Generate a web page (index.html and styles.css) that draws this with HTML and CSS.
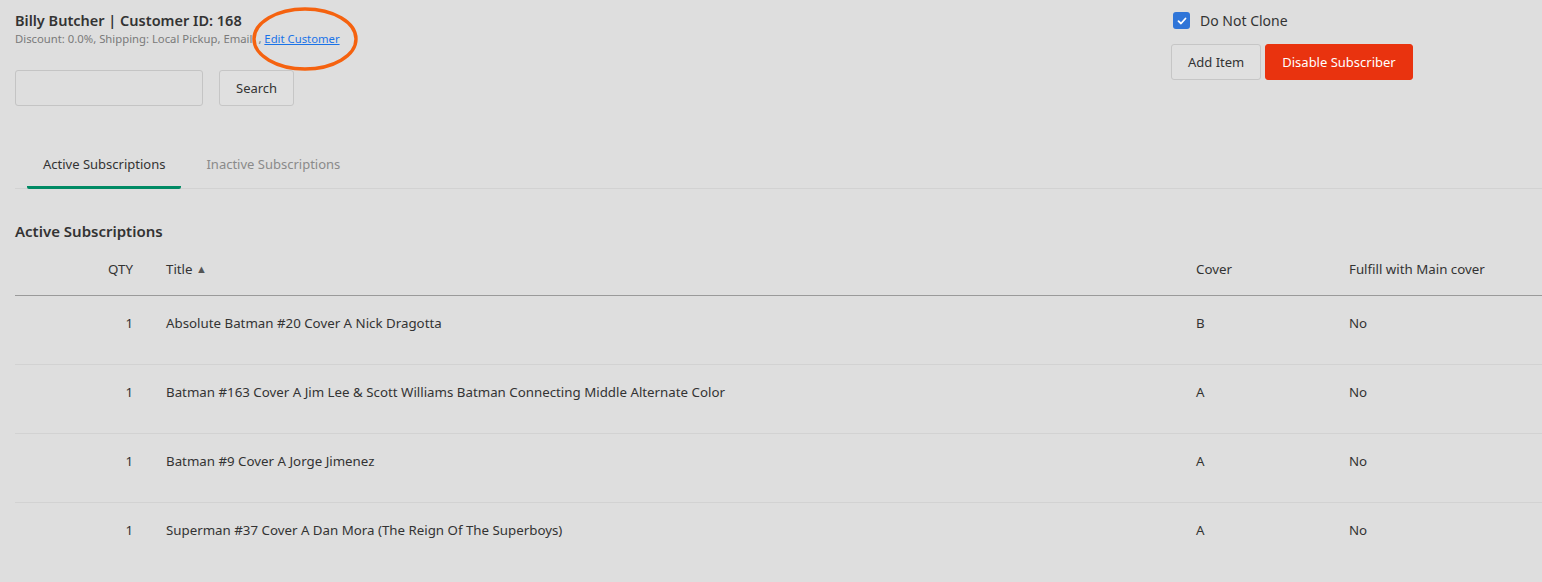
FILE: index.html
```html
<!DOCTYPE html>
<html lang="en">

<head>
  <meta charset="utf-8" />
  <title>Subscriber: Billy Butcher</title>
  <link rel="stylesheet" href="styles.css">
</head>

<body>
  <div class="top">
    <div class="customer">
      <h2 class="customer-name">Billy Butcher | Customer ID: 168</h2>
      <p class="customer-meta">
        Discount: 0.0%, Shipping: Local Pickup, Email: , <a href="#" class="edit-link">Edit Customer</a>
        <!-- marker ring drawn round the edit link -->
        <svg class="ring" width="112" height="68" viewBox="0 0 112 68">
          <ellipse cx="56" cy="34" rx="51" ry="30" fill="none" stroke="#f5620f" stroke-width="3.4" />
        </svg>
      </p>
      <form class="search">
        <input type="text" class="search-box">
        <button type="button" class="btn">Search</button>
      </form>
    </div>

    <div class="actions">
      <label class="check">
        <span class="checkbox">
          <svg width="10" height="10" viewBox="0 0 10 10">
            <path d="M1.5 5.2 L4 7.5 L8.5 2.5" fill="none" stroke="#fff" stroke-width="1.8" stroke-linecap="round" stroke-linejoin="round" />
          </svg>
        </span>
        Do Not Clone
      </label>
      <div class="buttons">
        <button type="button" class="btn">Add Item</button>
        <button type="button" class="btn btn-danger">Disable Subscriber</button>
      </div>
    </div>
  </div>

  <ul class="tabs">
    <li class="tab active">Active Subscriptions</li>
    <li class="tab">Inactive Subscriptions</li>
  </ul>

  <h3 class="section-title">Active Subscriptions</h3>

  <table class="subs">
    <colgroup>
      <col class="col-qty">
      <col class="col-title">
      <col class="col-cover">
      <col>
    </colgroup>
    <thead>
      <tr>
        <th class="qty">QTY</th>
        <th class="title">Title <span class="sort">&#9650;</span></th>
        <th>Cover</th>
        <th>Fulfill with Main cover</th>
      </tr>
    </thead>
    <tbody>
      <tr>
        <td class="qty">1</td>
        <td class="title">Absolute Batman #20 Cover A Nick Dragotta</td>
        <td>B</td>
        <td>No</td>
      </tr>
      <tr>
        <td class="qty">1</td>
        <td class="title">Batman #163 Cover A Jim Lee &amp; Scott Williams Batman Connecting Middle Alternate Color</td>
        <td>A</td>
        <td>No</td>
      </tr>
      <tr>
        <td class="qty">1</td>
        <td class="title">Batman #9 Cover A Jorge Jimenez</td>
        <td>A</td>
        <td>No</td>
      </tr>
      <tr>
        <td class="qty">1</td>
        <td class="title">Superman #37 Cover A Dan Mora (The Reign Of The Superboys)</td>
        <td>A</td>
        <td>No</td>
      </tr>
    </tbody>
  </table>
</body>

</html>
```

FILE: styles.css
```css
* {
  box-sizing: border-box;
}

body {
  background-color: #dedede;
  color: #333;
  font: 13px / 1.4 "Noto Sans", "Open Sans", sans-serif;
  padding: 0 0 0 15px;
  margin: 0;
  overflow: hidden;
}

/* Header: customer info on the left, actions on the right */
.top {
  display: flex;
  justify-content: space-between;
  padding-top: 9px;
}

.customer-name {
  font-size: 14.5px;
  font-weight: 600;
  margin: 0;
  line-height: 22px;
}

.customer-meta {
  position: relative;
  font-size: 11.3px;
  color: #7a7a7a;
  margin: 0;
  line-height: 16px;
}

.edit-link {
  color: #1a73e8;
}

.ring {
  position: absolute;
  left: 234px;
  top: -26px;
}

.search {
  display: flex;
  gap: 16px;
  margin-top: 23px;
}

.search-box {
  width: 188px;
  height: 36px;
  border: 1px solid #c4c4c4;
  border-radius: 3px;
  background: #dedede;
}

.btn {
  height: 36px;
  padding: 0 16px;
  border: 1px solid #c6c6c6;
  border-radius: 3px;
  background: #e0e0e0;
  color: #333;
  font: inherit;
  font-size: 13px;
}

.btn-danger {
  background: #e9330f;
  border-color: #e9330f;
  color: #fff;
}

.actions {
  width: 371px;
  padding-top: 2px;
}

.check {
  display: flex;
  align-items: center;
  gap: 10px;
  font-size: 14px;
  padding-left: 2px;
}

.checkbox {
  width: 17px;
  height: 17px;
  border-radius: 3px;
  background: #2f75d8;
  display: flex;
  align-items: center;
  justify-content: center;
}

.buttons {
  display: flex;
  gap: 4px;
  margin-top: 13px;
}

/* Tabs */
.tabs {
  list-style: none;
  display: flex;
  margin: 39px 0 0;
  padding: 0 0 0 12px;
  border-bottom: 1px solid #d2d2d2;
}

.tab {
  padding: 10px 16px 13px;
  color: #8a8a8a;
  border-bottom: 3px solid transparent;
  margin-bottom: -1px;
  margin-right: 9px;
}

.tab.active {
  color: #333;
  border-bottom-color: #008a64;
  border-radius: 2px;
}

.section-title {
  font-size: 15px;
  font-weight: 600;
  margin: 31px 0 0;
  line-height: 22px;
}

/* Subscriptions table */
.subs {
  width: 100%;
  table-layout: fixed;
  border-collapse: collapse;
  margin-top: 18px;
  font-size: 13.3px;
}

.col-qty {
  width: 133px;
}

.col-title {
  width: 1048px;
}

.col-cover {
  width: 153px;
}

.subs th {
  font-weight: normal;
  text-align: left;
  height: 35px;
  padding: 0;
  vertical-align: top;
  border-bottom: 1px solid #9a9a9a;
}

.subs td {
  height: 69px;
  padding: 18px 0 0;
  vertical-align: top;
  line-height: 18px;
  border-bottom: 1px solid #d2d2d2;
}

.subs tbody tr:last-child td {
  border-bottom: none;
}

.subs .qty {
  text-align: right;
  padding-right: 15px;
}

.subs .title {
  padding-left: 18px;
}

.sort {
  font-size: 11px;
  color: #555;
  vertical-align: 1px;
}
```
